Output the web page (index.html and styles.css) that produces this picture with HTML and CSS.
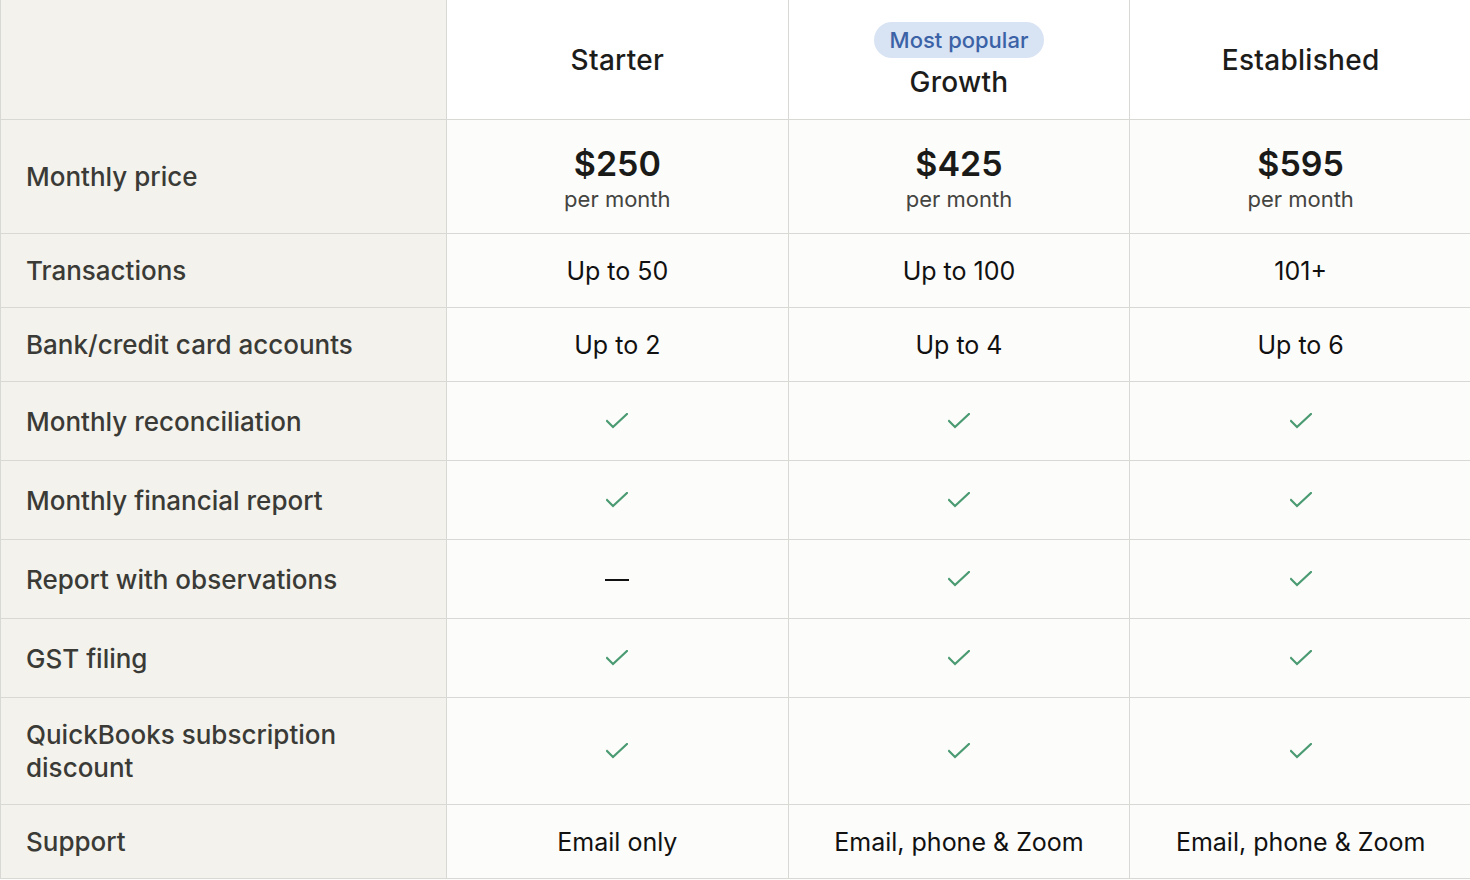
FILE: index.html
```html
<!DOCTYPE html>
<html lang="en">
<head>
    <meta charset="UTF-8">
    <meta name="viewport" content="width=device-width, initial-scale=1.0">
    <title>Compare plans</title>
    <link rel="stylesheet" href="styles.css">
</head>
<body>
    <table class="plans">
        <colgroup>
            <col class="col-label">
            <col class="col-plan">
            <col class="col-plan">
            <col class="col-plan">
        </colgroup>
        <thead>
            <tr class="row-head">
                <th class="label"></th>
                <th class="plan-name">Starter</th>
                <th class="plan-name">
                    <span class="badge">Most popular</span>
                    <span class="name">Growth</span>
                </th>
                <th class="plan-name">Established</th>
            </tr>
        </thead>
        <tbody>
            <tr class="row-price">
                <th class="label">Monthly price</th>
                <td><span class="price">$250</span><span class="per">per month</span></td>
                <td><span class="price">$425</span><span class="per">per month</span></td>
                <td><span class="price">$595</span><span class="per">per month</span></td>
            </tr>
            <tr class="row-text">
                <th class="label">Transactions</th>
                <td>Up to 50</td>
                <td>Up to 100</td>
                <td>101+</td>
            </tr>
            <tr class="row-text">
                <th class="label">Bank/credit card accounts</th>
                <td>Up to 2</td>
                <td>Up to 4</td>
                <td>Up to 6</td>
            </tr>
            <tr class="row-check">
                <th class="label">Monthly reconciliation</th>
                <td><svg class="check" viewBox="0 0 22 16"><path d="M1 8l6 6L21 1"/></svg></td>
                <td><svg class="check" viewBox="0 0 22 16"><path d="M1 8l6 6L21 1"/></svg></td>
                <td><svg class="check" viewBox="0 0 22 16"><path d="M1 8l6 6L21 1"/></svg></td>
            </tr>
            <tr class="row-check">
                <th class="label">Monthly financial report</th>
                <td><svg class="check" viewBox="0 0 22 16"><path d="M1 8l6 6L21 1"/></svg></td>
                <td><svg class="check" viewBox="0 0 22 16"><path d="M1 8l6 6L21 1"/></svg></td>
                <td><svg class="check" viewBox="0 0 22 16"><path d="M1 8l6 6L21 1"/></svg></td>
            </tr>
            <tr class="row-check">
                <th class="label">Report with observations</th>
                <td><span class="dash"></span></td>
                <td><svg class="check" viewBox="0 0 22 16"><path d="M1 8l6 6L21 1"/></svg></td>
                <td><svg class="check" viewBox="0 0 22 16"><path d="M1 8l6 6L21 1"/></svg></td>
            </tr>
            <tr class="row-check">
                <th class="label">GST filing</th>
                <td><svg class="check" viewBox="0 0 22 16"><path d="M1 8l6 6L21 1"/></svg></td>
                <td><svg class="check" viewBox="0 0 22 16"><path d="M1 8l6 6L21 1"/></svg></td>
                <td><svg class="check" viewBox="0 0 22 16"><path d="M1 8l6 6L21 1"/></svg></td>
            </tr>
            <tr class="row-tall">
                <th class="label">QuickBooks subscription<br>discount</th>
                <td><svg class="check" viewBox="0 0 22 16"><path d="M1 8l6 6L21 1"/></svg></td>
                <td><svg class="check" viewBox="0 0 22 16"><path d="M1 8l6 6L21 1"/></svg></td>
                <td><svg class="check" viewBox="0 0 22 16"><path d="M1 8l6 6L21 1"/></svg></td>
            </tr>
            <tr class="row-text">
                <th class="label">Support</th>
                <td>Email only</td>
                <td>Email, phone &amp; Zoom</td>
                <td>Email, phone &amp; Zoom</td>
            </tr>
        </tbody>
    </table>
</body>
</html>
```

FILE: styles.css
```css
body {
    margin: 0;
    background: #fcfcfa;
    font-family: Inter, "Noto Sans", sans-serif;
    color: #111;
    overflow: hidden;
}

.plans {
    width: 1472px;
    border-collapse: collapse;
    table-layout: fixed;
}

.col-label {
    width: 446px;
}

.plans th,
.plans td {
    border: 1px solid #d8d8d4;
    padding: 0;
    text-align: center;
    vertical-align: middle;
    font-size: 25px;
    font-weight: 400;
}

.plans td {
    background: #fcfcfa;
}

.plans th.label {
    background: #f3f2ec;
    text-align: left;
    padding: 0 24px 0 25px;
    color: #3a3a36;
    font-size: 26px;
    font-weight: 500;
    line-height: 33px;
}

.row-head th {
    height: 119px;
    border-top: none;
}

.row-head .plan-name {
    background: #fff;
    font-size: 28px;
    font-weight: 500;
    letter-spacing: 0.01em;
    color: #1c1c1a;
}

.badge {
    display: inline-block;
    margin-top: -5px;
    padding: 0 16px;
    height: 36px;
    line-height: 36px;
    border-radius: 18px;
    background: #d8e3f3;
    color: #3b62a6;
    font-size: 22px;
    font-weight: 500;
    letter-spacing: 0;
}

.name {
    display: block;
    margin-top: 8px;
    line-height: 32px;
}

.row-price td,
.row-price th {
    height: 113px;
}

.price {
    display: block;
    font-size: 34px;
    font-weight: 600;
    line-height: 38px;
    color: #1a1a18;
    margin-top: 4px;
}

.per {
    display: block;
    margin-top: 2px;
    font-size: 22px;
    line-height: 28px;
    color: #444441;
}

.row-text td,
.row-text th {
    height: 73px;
}

.row-check td,
.row-check th {
    height: 78px;
}

.row-tall td,
.row-tall th {
    height: 106px;
}

.check {
    display: block;
    margin: 0 auto;
    width: 22px;
    height: 16px;
    fill: none;
    stroke: #4a9a72;
    stroke-width: 2.2;
    stroke-linecap: square;
}

.dash {
    display: block;
    margin: 2px auto 0;
    width: 24px;
    height: 2px;
    background: #111;
}
```
